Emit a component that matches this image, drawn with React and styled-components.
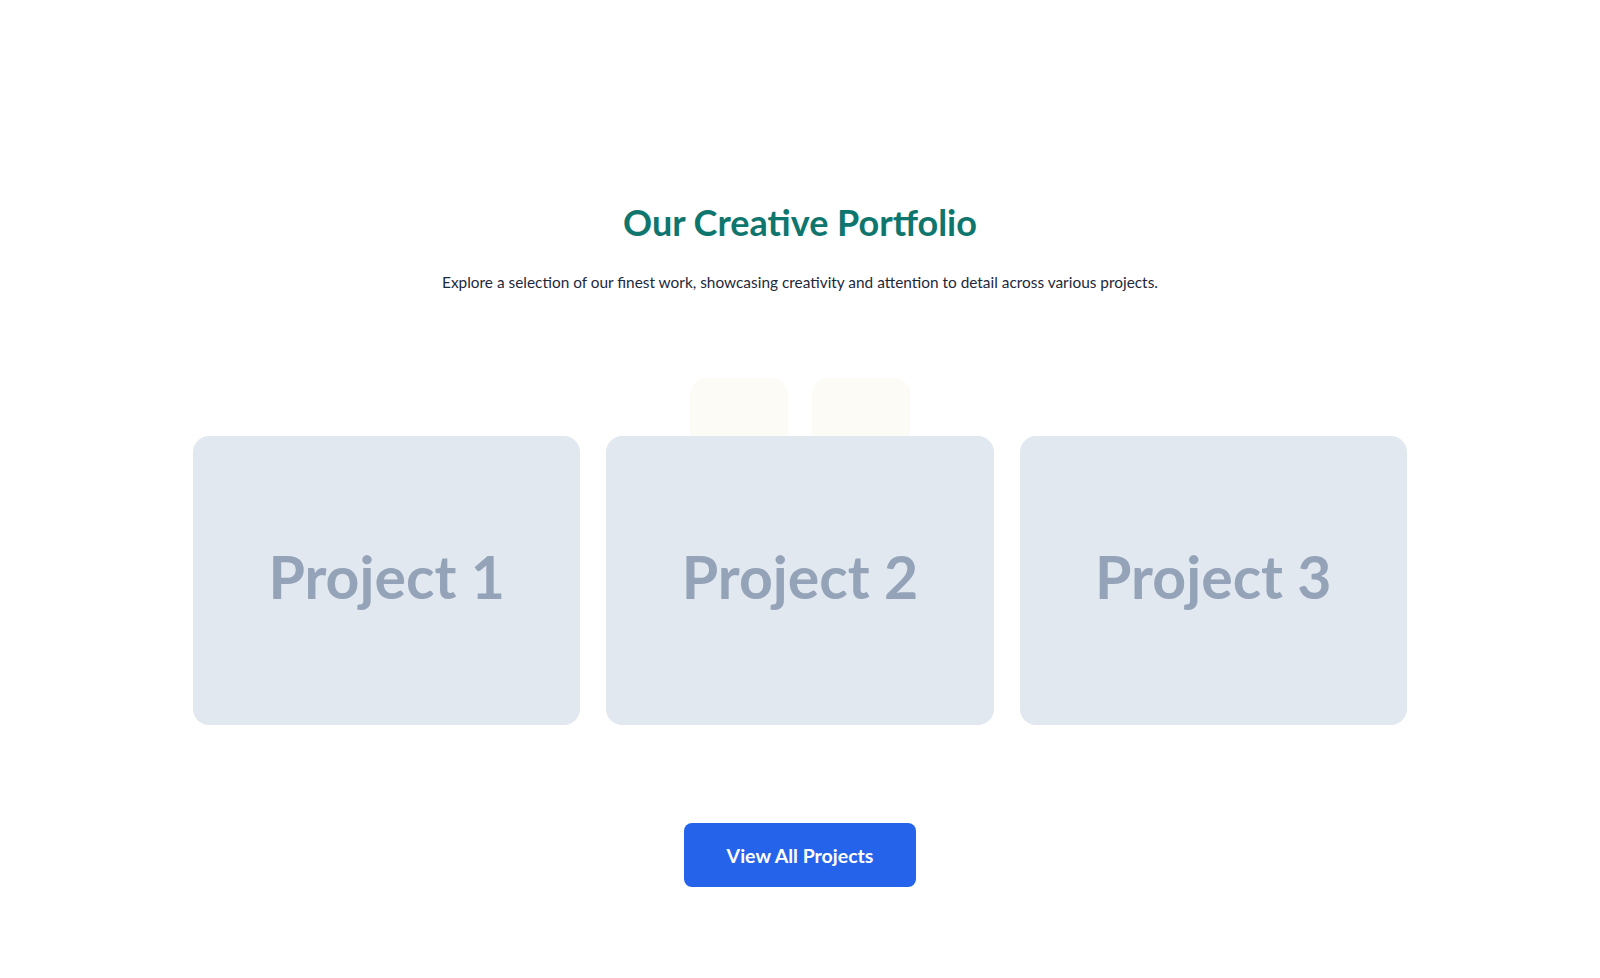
import React from 'react';
import styled, { createGlobalStyle } from 'styled-components';

const GlobalStyle = createGlobalStyle`
  body {
    margin: 0;
    background: #ffffff;
    font-family: 'Lato', 'Open Sans', sans-serif;
  }
`;

const Section = styled.section`
  display: flex;
  flex-direction: column;
  align-items: center;
  padding: 202px 32px 80px;
`;

const Title = styled.h2`
  margin: 0;
  font-size: 36px;
  line-height: 40px;
  font-weight: 700;
  color: #0f766e;
  text-align: center;
`;

const Subtitle = styled.p`
  margin: 28px 0 0;
  font-size: 15.4px;
  line-height: 24px;
  color: #1e293b;
  text-align: center;
`;

const TabRow = styled.div`
  display: flex;
  gap: 24px;
  margin-top: 84px;
`;

const Tab = styled.div`
  width: 98px;
  height: 58px;
  border-radius: 16px 16px 0 0;
  background: #fcfbf6;
`;

const Grid = styled.div`
  display: grid;
  grid-template-columns: repeat(3, 1fr);
  gap: 26px;
  width: 100%;
  max-width: 1214px;
`;

const Card = styled.div`
  height: 289px;
  border-radius: 16px;
  background: #e2e8f0;
  display: flex;
  align-items: center;
  justify-content: center;
  font-family: 'Lato', sans-serif;
  font-size: 59px;
  font-weight: 700;
  color: #94a3b8;
  padding-bottom: 8px;
  box-sizing: border-box;
`;

const Button = styled.button`
  margin-top: 98px;
  width: 232px;
  height: 64px;
  border: none;
  border-radius: 8px;
  background: #2563eb;
  color: #ffffff;
  font-family: 'Lato', sans-serif;
  font-size: 19.5px;
  font-weight: 700;
  cursor: pointer;
`;

const projects = ['Project 1', 'Project 2', 'Project 3'];

const App = () => {
  return (
    <>
      <GlobalStyle />
      <Section>
        <Title>Our Creative Portfolio</Title>
        <Subtitle>
          Explore a selection of our finest work, showcasing creativity and attention to detail across various projects.
        </Subtitle>
        <TabRow>
          <Tab />
          <Tab />
        </TabRow>
        <Grid>
          {projects.map((name) => (
            <Card key={name}>{name}</Card>
          ))}
        </Grid>
        <Button>View All Projects</Button>
      </Section>
    </>
  );
};

export default App;
